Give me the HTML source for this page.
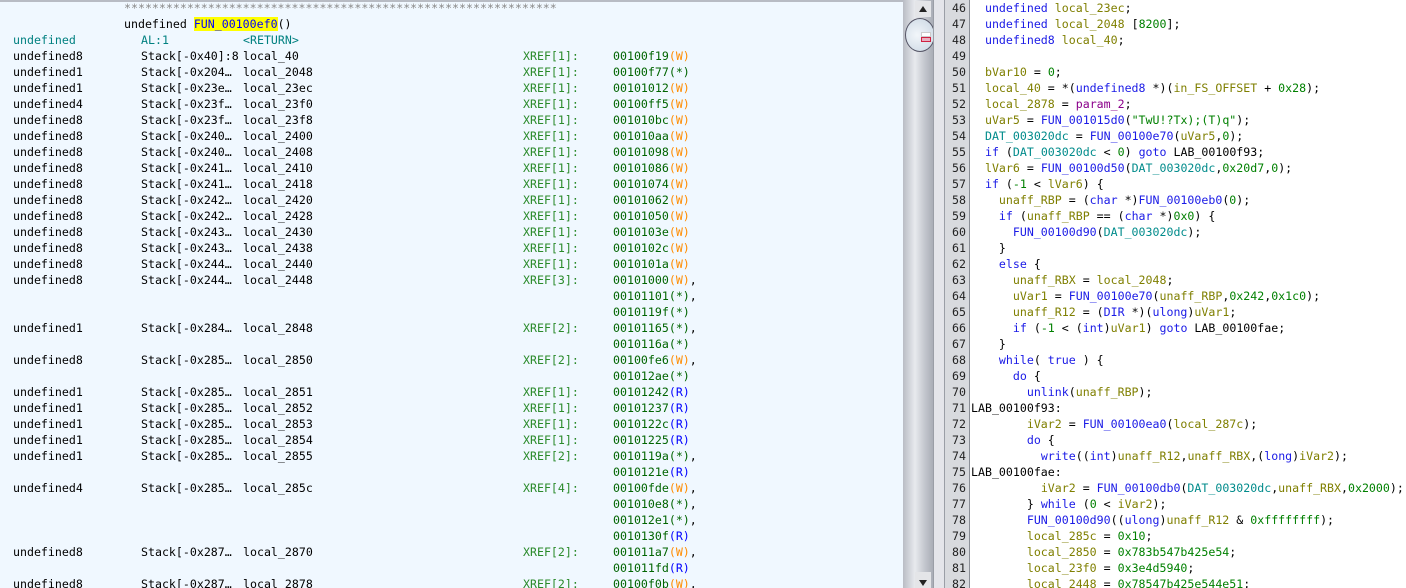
<!DOCTYPE html>
<html style="width:1406px;height:588px;overflow:hidden"><head><meta charset="utf-8"><style>
*{margin:0;padding:0;box-sizing:border-box}
body{width:1406px;height:588px;overflow:hidden;background:#fff;font-family:"DejaVu Sans Mono","Liberation Mono",monospace;font-size:11.6px;position:relative}
#L{position:absolute;left:0;top:0;width:903px;height:588px;background:#f0f8ff;border-top:2px solid #b8bcc4}
.r{position:absolute;height:16px;line-height:16px;white-space:pre}
.x{color:#2a8a2a}.a{color:#006400}.w{color:#ff8c00}.b{color:#0000ff}.t{color:#008080}
#sb{position:absolute;left:903px;top:0;width:30px;height:588px;background:linear-gradient(90deg,#b9bcc4,#e8eaee 40%,#c6c9d0 70%,#a9adb6)}
#dv{position:absolute;left:933px;top:0;width:12px;height:588px;background:#e4e5ea;border-left:1px solid #9a9ea6;border-right:1px solid #9a9ea6}
#ln{position:absolute;left:945px;top:0;width:25px;height:588px;background:#d8dade;border-right:1px solid #8a8e96}
#R{position:absolute;left:971px;top:0;width:435px;height:588px;background:#fff;overflow:hidden}
.k{color:#1a1ae6}.v{color:#7f7f00}.n{color:#008000}.p{color:#8b008b}.g{color:#008b8b}.f{color:#1a1ae6}
pre{font:inherit;line-height:16px;position:absolute}
#clip{position:absolute;left:0;top:0;width:903px;height:588px;overflow:hidden}
</style></head><body>
<div id="L">
<div class="r" style="left:124px;top:-2px;color:#888">**************************************************************</div>
<div class="r" style="left:124px;top:14px">undefined <span style="background:#ffff00;color:#0000ff">FUN_00100ef0</span>()</div>
<div class="r t" style="left:13px;top:30px">undefined</div><div class="r t" style="left:141px;top:30px">AL:1</div><div class="r t" style="left:243px;top:30px">&lt;RETURN&gt;</div>
</div>
<div id="clip"><div id="rows"></div></div>
<script>
var d=[
["undefined8","Stack[-0x40]:8","local_40",1,["00100f19|W"]],
["undefined1","Stack[-0x204…","local_2048",1,["00100f77|*"]],
["undefined1","Stack[-0x23e…","local_23ec",1,["00101012|W"]],
["undefined4","Stack[-0x23f…","local_23f0",1,["00100ff5|W"]],
["undefined8","Stack[-0x23f…","local_23f8",1,["001010bc|W"]],
["undefined8","Stack[-0x240…","local_2400",1,["001010aa|W"]],
["undefined8","Stack[-0x240…","local_2408",1,["00101098|W"]],
["undefined8","Stack[-0x241…","local_2410",1,["00101086|W"]],
["undefined8","Stack[-0x241…","local_2418",1,["00101074|W"]],
["undefined8","Stack[-0x242…","local_2420",1,["00101062|W"]],
["undefined8","Stack[-0x242…","local_2428",1,["00101050|W"]],
["undefined8","Stack[-0x243…","local_2430",1,["0010103e|W"]],
["undefined8","Stack[-0x243…","local_2438",1,["0010102c|W"]],
["undefined8","Stack[-0x244…","local_2440",1,["0010101a|W"]],
["undefined8","Stack[-0x244…","local_2448",3,["00101000|W","00101101|*","0010119f|*"]],
["undefined1","Stack[-0x284…","local_2848",2,["00101165|*","0010116a|*"]],
["undefined8","Stack[-0x285…","local_2850",2,["00100fe6|W","001012ae|*"]],
["undefined1","Stack[-0x285…","local_2851",1,["00101242|R"]],
["undefined1","Stack[-0x285…","local_2852",1,["00101237|R"]],
["undefined1","Stack[-0x285…","local_2853",1,["0010122c|R"]],
["undefined1","Stack[-0x285…","local_2854",1,["00101225|R"]],
["undefined1","Stack[-0x285…","local_2855",2,["0010119a|*","0010121e|R"]],
["undefined4","Stack[-0x285…","local_285c",4,["00100fde|W","001010e8|*","001012e1|*","0010130f|R"]],
["undefined8","Stack[-0x287…","local_2870",2,["001011a7|W","001011fd|R"]],
["undefined8","Stack[-0x287…","local_2878",2,["00100f0b|W"]]];
var h="",y=48;
d.forEach(function(e){
 h+='<div class="r" style="left:13px;top:'+y+'px">'+e[0]+'</div><div class="r" style="left:141px;top:'+y+'px">'+e[1]+'</div><div class="r" style="left:243px;top:'+y+'px">'+e[2]+'</div><div class="r x" style="left:523px;top:'+y+'px">XREF['+e[3]+']:</div>';
 e[4].forEach(function(a,i){var p=a.split("|"),c=p[1]=="W"?"w":p[1]=="R"?"b":"";
  h+='<div class="r a" style="left:613px;top:'+y+'px">'+p[0]+'<span class="'+c+'">('+p[1]+')</span>'+(i<e[4].length-1||e[2]=="local_2878"?'<span style="color:#000">,</span>':'')+'</div>';y+=16;});
});
document.getElementById("rows").innerHTML=h;
</script>
<div id="sb">
<div style="position:absolute;left:2px;top:18px;width:30px;height:34px;border-radius:50%;border:1px solid #556;background:radial-gradient(circle at 40% 50%,#f2f6fa,#c9d6e2)"></div>
<div style="position:absolute;left:12px;top:1px;width:16px;height:16px;background:#e4e5e8"></div>
<div style="position:absolute;left:16px;top:6px;border:4px solid transparent;border-bottom:6px solid #222;border-top:0"></div>
<div style="position:absolute;left:12px;top:572px;width:16px;height:16px;background:#e4e5e8"></div>
<div style="position:absolute;left:16px;top:580px;border:4px solid transparent;border-top:6px solid #222;border-bottom:0"></div>
<div style="position:absolute;left:18px;top:32px;width:10px;height:5px;border:1px solid #ccc;background:#fff"></div>
<div style="position:absolute;left:18px;top:37px;width:10px;height:5px;border:1px solid #d02040;background:#e8b0c0"></div>
</div>
<div id="dv"></div>
<div id="ln"><pre style="right:3px;top:0;text-align:right;color:#222">46
47
48
49
50
51
52
53
54
55
56
57
58
59
60
61
62
63
64
65
66
67
68
69
70
71
72
73
74
75
76
77
78
79
80
81
82</pre></div>
<div id="R"><pre style="left:0;top:0;color:#000">  <span class="k">undefined</span> <span class="v">local_23ec</span>;
  <span class="k">undefined</span> <span class="v">local_2048</span> [<span class="n">8200</span>];
  <span class="k">undefined8</span> <span class="v">local_40</span>;

  <span class="v">bVar10</span> = <span class="n">0</span>;
  <span class="v">local_40</span> = *(<span class="k">undefined8</span> *)(<span class="v">in_FS_OFFSET</span> + <span class="n">0x28</span>);
  <span class="v">local_2878</span> = <span class="p">param_2</span>;
  <span class="v">uVar5</span> = <span class="f">FUN_001015d0</span>(<span class="n">"TwU!?Tx);(T)q"</span>);
  <span class="g">DAT_003020dc</span> = <span class="f">FUN_00100e70</span>(<span class="v">uVar5</span>,<span class="n">0</span>);
  <span class="k">if</span> (<span class="g">DAT_003020dc</span> &lt; <span class="n">0</span>) <span class="k">goto</span> LAB_00100f93;
  <span class="v">lVar6</span> = <span class="f">FUN_00100d50</span>(<span class="g">DAT_003020dc</span>,<span class="n">0x20d7</span>,<span class="n">0</span>);
  <span class="k">if</span> (<span class="n">-1</span> &lt; <span class="v">lVar6</span>) {
    <span class="v">unaff_RBP</span> = (<span class="k">char</span> *)<span class="f">FUN_00100eb0</span>(<span class="n">0</span>);
    <span class="k">if</span> (<span class="v">unaff_RBP</span> == (<span class="k">char</span> *)<span class="n">0x0</span>) {
      <span class="f">FUN_00100d90</span>(<span class="g">DAT_003020dc</span>);
    }
    <span class="k">else</span> {
      <span class="v">unaff_RBX</span> = <span class="v">local_2048</span>;
      <span class="v">uVar1</span> = <span class="f">FUN_00100e70</span>(<span class="v">unaff_RBP</span>,<span class="n">0x242</span>,<span class="n">0x1c0</span>);
      <span class="v">unaff_R12</span> = (<span class="k">DIR</span> *)(<span class="k">ulong</span>)<span class="v">uVar1</span>;
      <span class="k">if</span> (<span class="n">-1</span> &lt; (<span class="k">int</span>)<span class="v">uVar1</span>) <span class="k">goto</span> LAB_00100fae;
    }
    <span class="k">while</span>( <span class="k">true</span> ) {
      <span class="k">do</span> {
        <span class="f">unlink</span>(<span class="v">unaff_RBP</span>);
LAB_00100f93:
        <span class="v">iVar2</span> = <span class="f">FUN_00100ea0</span>(<span class="v">local_287c</span>);
        <span class="k">do</span> {
          <span class="f">write</span>((<span class="k">int</span>)<span class="v">unaff_R12</span>,<span class="v">unaff_RBX</span>,(<span class="k">long</span>)<span class="v">iVar2</span>);
LAB_00100fae:
          <span class="v">iVar2</span> = <span class="f">FUN_00100db0</span>(<span class="g">DAT_003020dc</span>,<span class="v">unaff_RBX</span>,<span class="n">0x2000</span>);
        } <span class="k">while</span> (<span class="n">0</span> &lt; <span class="v">iVar2</span>);
        <span class="f">FUN_00100d90</span>((<span class="k">ulong</span>)<span class="v">unaff_R12</span> &amp; <span class="n">0xffffffff</span>);
        <span class="v">local_285c</span> = <span class="n">0x10</span>;
        <span class="v">local_2850</span> = <span class="n">0x783b547b425e54</span>;
        <span class="v">local_23f0</span> = <span class="n">0x3e4d5940</span>;
        <span class="v">local_2448</span> = <span class="n">0x78547b425e544e51</span>;</pre></div>
</body></html>
